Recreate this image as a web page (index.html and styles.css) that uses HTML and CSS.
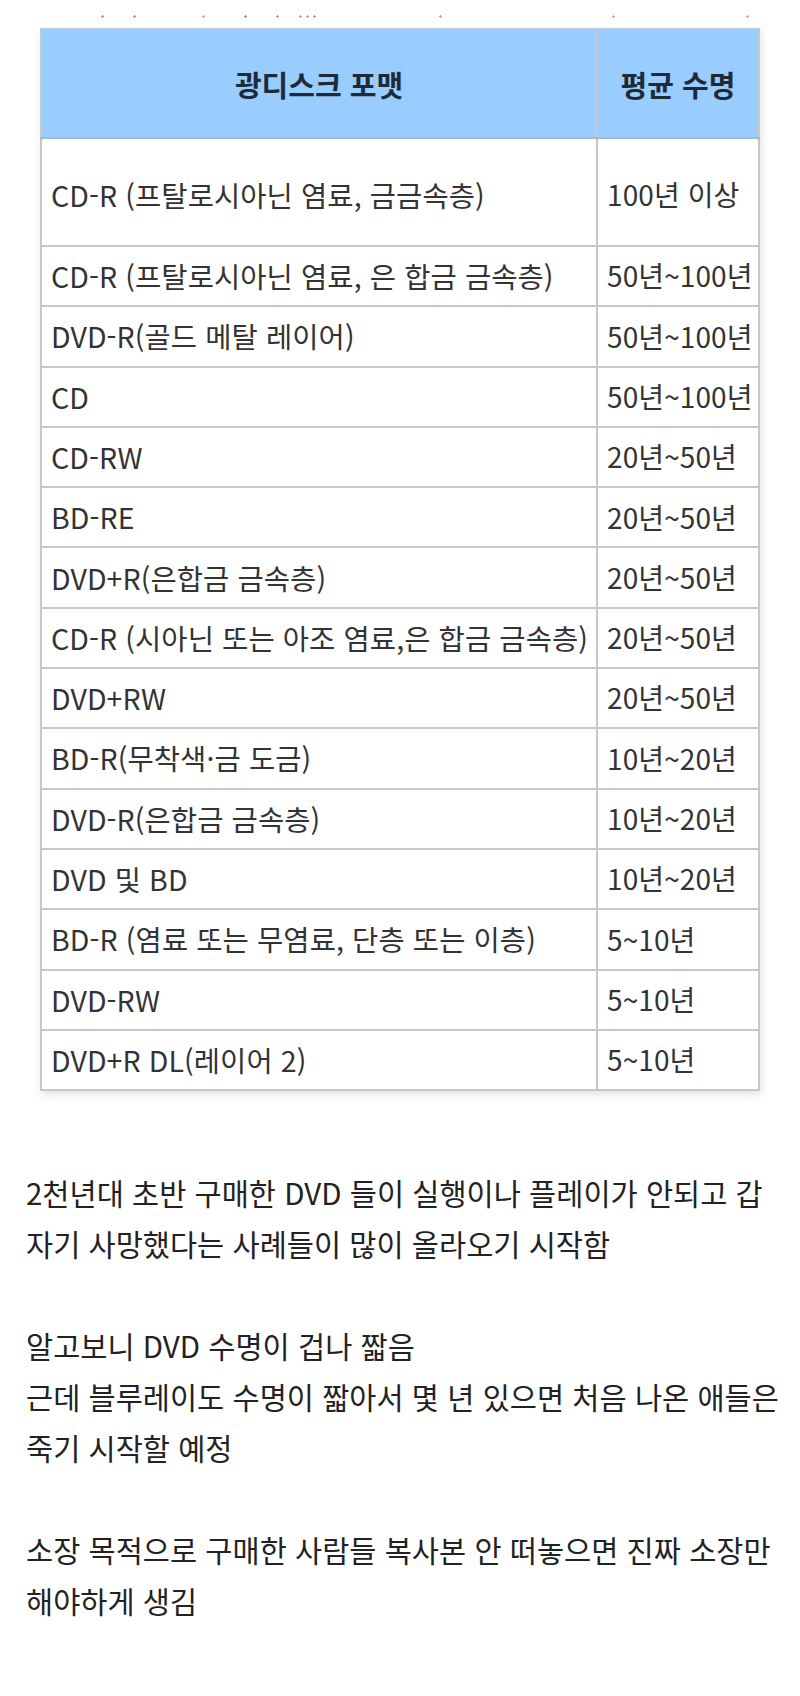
FILE: index.html
```html
<!DOCTYPE html>
<html lang="ko">
<head>
<meta charset="utf-8">
<title>광디스크 수명</title>
<link rel="stylesheet" href="styles.css">
</head>
<body>
<div class="page">
  <div class="specks"></div>
  <div class="table-wrap">
    <table class="disc">
      <thead>
        <tr class="head-row"><th class="c1">광디스크 포맷</th><th class="c2">평균 수명</th></tr>
      </thead>
      <tbody>
        <tr class="tall"><td>CD-R (프탈로시아닌 염료, 금금속층)</td><td class="c2">100년 이상</td></tr>
        <tr><td>CD-R (프탈로시아닌 염료, 은 합금 금속층)</td><td class="c2">50년~100년</td></tr>
        <tr><td>DVD-R(골드 메탈 레이어)</td><td class="c2">50년~100년</td></tr>
        <tr><td>CD</td><td class="c2">50년~100년</td></tr>
        <tr><td>CD-RW</td><td class="c2">20년~50년</td></tr>
        <tr><td>BD-RE</td><td class="c2">20년~50년</td></tr>
        <tr><td>DVD+R(은합금 금속층)</td><td class="c2">20년~50년</td></tr>
        <tr><td>CD-R (시아닌 또는 아조 염료,은 합금 금속층)</td><td class="c2">20년~50년</td></tr>
        <tr><td>DVD+RW</td><td class="c2">20년~50년</td></tr>
        <tr><td>BD-R(무착색·금 도금)</td><td class="c2">10년~20년</td></tr>
        <tr><td>DVD-R(은합금 금속층)</td><td class="c2">10년~20년</td></tr>
        <tr><td>DVD 및 BD</td><td class="c2">10년~20년</td></tr>
        <tr><td>BD-R (염료 또는 무염료, 단층 또는 이층)</td><td class="c2">5~10년</td></tr>
        <tr><td>DVD-RW</td><td class="c2">5~10년</td></tr>
        <tr><td>DVD+R DL(레이어 2)</td><td class="c2">5~10년</td></tr>
      </tbody>
    </table>
  </div>
  <div class="post">
    <p>2천년대 초반 구매한 DVD 들이 실행이나 플레이가 안되고 갑<br>자기 사망했다는 사례들이 많이 올라오기 시작함</p>
    <p class="blank"><br></p>
    <p>알고보니 DVD 수명이 겁나 짧음</p>
    <p>근데 블루레이도 수명이 짧아서 몇 년 있으면 처음 나온 애들은<br>죽기 시작할 예정</p>
    <p class="blank"><br></p>
    <p>소장 목적으로 구매한 사람들 복사본 안 떠놓으면 진짜 소장만<br>해야하게 생김</p>
  </div>
</div>
</body>
</html>
```

FILE: styles.css
```css
html, body {
  margin: 0;
  padding: 0;
  background: #ffffff;
}

.page {
  width: 800px;
  display: flex;
  flex-direction: column;
}

.specks {
  height: 3px;
  margin-top: 15px;
  background-image:
    radial-gradient(circle, #9a9a9a 1px, transparent 1.4px),
    radial-gradient(circle, #9a9a9a 1px, transparent 1.4px),
    radial-gradient(circle, #b0b0b0 1px, transparent 1.4px),
    radial-gradient(circle, #9a9a9a 1px, transparent 1.4px),
    radial-gradient(circle, #a0a0a0 1px, transparent 1.4px),
    radial-gradient(circle, #a0a0a0 1px, transparent 1.4px),
    radial-gradient(circle, #a0a0a0 1px, transparent 1.4px),
    radial-gradient(circle, #a0a0a0 1px, transparent 1.4px),
    radial-gradient(circle, #b0b0b0 1px, transparent 1.4px),
    radial-gradient(circle, #b0b0b0 1px, transparent 1.4px),
    radial-gradient(circle, #b0b0b0 1px, transparent 1.4px);
  background-size: 3px 3px;
  background-repeat: no-repeat;
  background-position:
    101px 0, 133px 0, 202px 0, 244px 0, 276px 0, 299px 0, 306px 0, 313px 0, 439px 0, 612px 0, 746px 0;
}

.table-wrap {
  margin-top: 10px;
  margin-left: 40px;
  width: 720px;
  box-shadow: 0 5px 8px rgba(0, 0, 0, 0.07), 3px 2px 6px rgba(0, 0, 0, 0.05);
}

.disc {
  width: 720px;
  border-collapse: collapse;
  table-layout: fixed;
  font-family: "Noto Sans CJK KR", "Noto Sans", sans-serif;
  color: #333333;
}

.disc th,
.disc td {
  border: 2px solid #c7c7c7;
  padding: 0 0 0 9px;
  text-align: left;
  vertical-align: middle;
  white-space: nowrap;
  overflow: hidden;
}

.disc th.c1 { width: 554px; }

.disc thead th {
  background: #99ccff;
  color: #1d2a38;
  font-weight: 700;
  font-size: 29px;
  text-align: center;
  padding: 0;
  border-top-color: #b9c9d9;
  border-bottom-color: #a8b8c8;
}

.head-row { height: 109px; }

.disc td {
  font-size: 28.5px;
  height: 58.3px;
  line-height: 1.2;
  letter-spacing: 0.1px;
}

.disc td.c2 {
  padding-left: 9px;
  font-size: 28px;
}

.disc tr.tall td {
  height: 100px;
  padding-top: 6px;
}

.post {
  margin-top: 76px;
  padding-left: 26px;
  width: 774px;
  font-family: "Noto Sans CJK KR", "Noto Sans", sans-serif;
  font-size: 29.5px;
  line-height: 51px;
  color: #222222;
}

.post p {
  margin: 0;
  white-space: nowrap;
}
```
